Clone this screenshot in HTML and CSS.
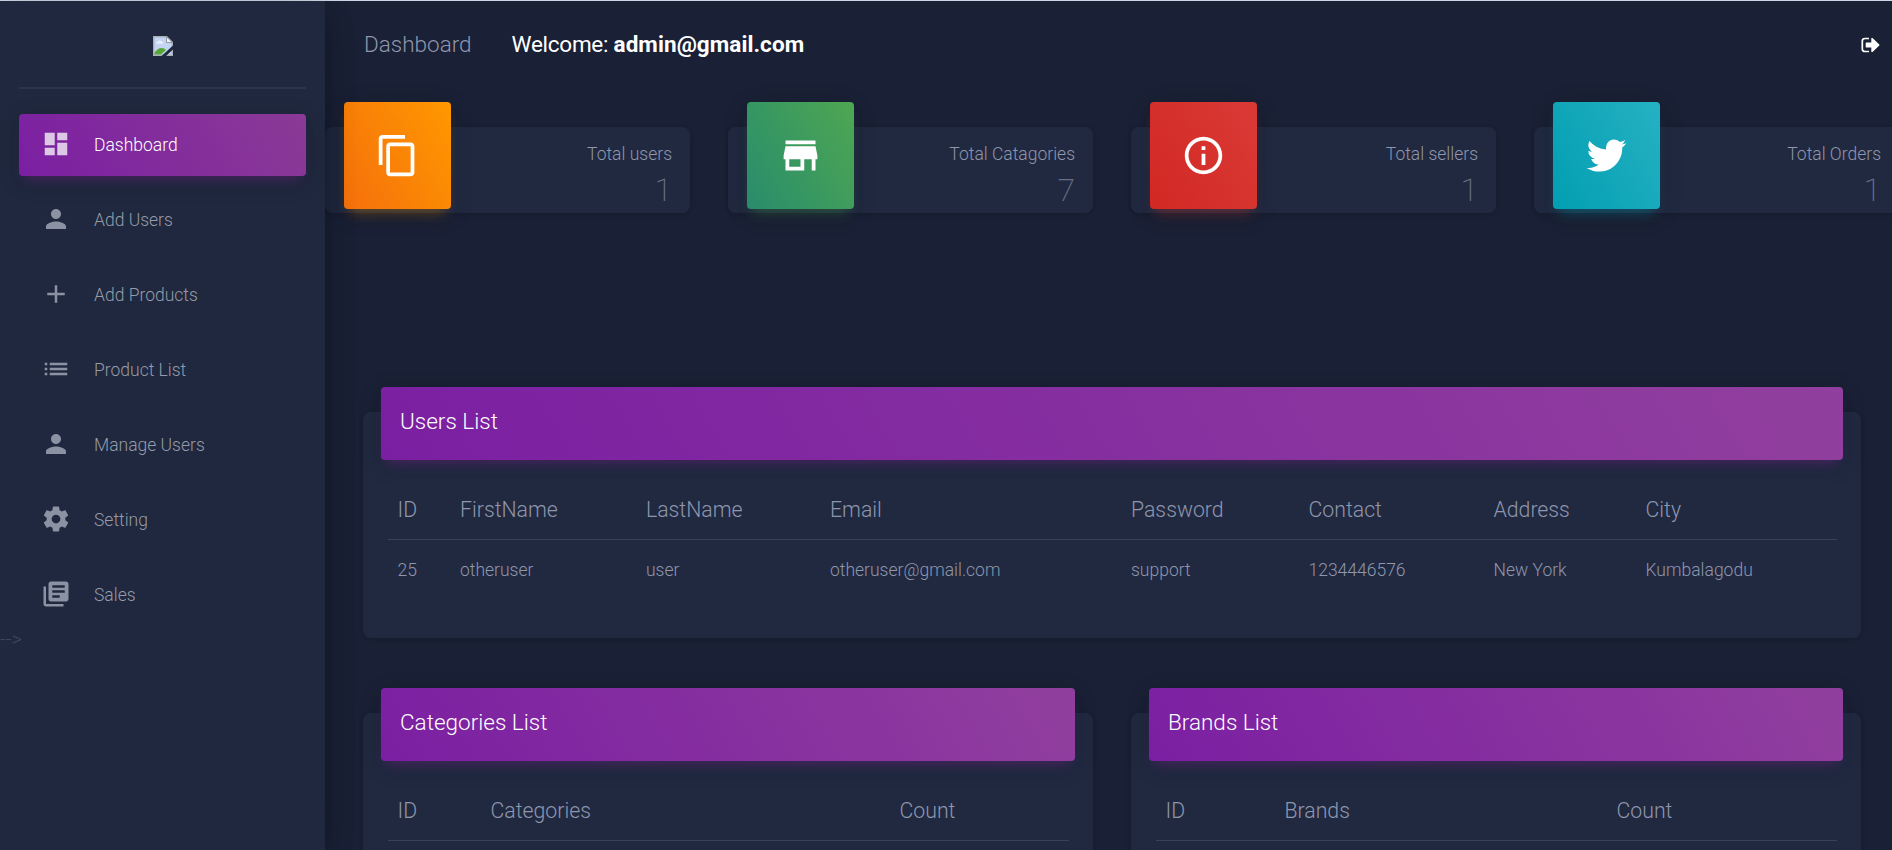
FILE: index.html
```html
<!DOCTYPE html>
<html lang="en">
<head>
<meta charset="utf-8">
<title>Dashboard</title>
<link rel="stylesheet" href="styles.css">
</head>
<body>
<div class="wrapper">
  <aside class="sidebar">
    <div class="logo">
      <svg width="20" height="20" viewBox="0 0 20 20">
        <path fill="#a9afb9" d="M0 0h14l6 6v14H0z"/>
        <path fill="#c3d5f2" d="M1.5 1.5h12l5 5v12h-17z"/>
        <path fill="#eef3fb" d="M3 7.500q.4-2 2.300-2 1.200-2 3 0 1.900 0 2.200 2z"/>
        <path fill="#58a636" d="M1.500 18.500v-1.500q3-5 7-5 3 0 4.500 2l-5 4.500z"/>
        <path fill="#f4f6fa" stroke="#8f97a5" d="M13.500.8v5.700h5.700z"/>
        <path fill="#20283d" d="M20 9.500v4L13 20H8.500z"/>
      </svg>
    </div>
    <nav class="nav">
      <a class="nav-link active"><svg class="icon" viewBox="0 0 24 24"><path d="M3 13h8V3H3v10zm0 8h8v-6H3v6zm10 0h8V11h-8v10zm0-18v6h8V3h-8z"/></svg><span>Dashboard</span></a>
      <a class="nav-link"><svg class="icon" viewBox="0 0 24 24"><path d="M12 12c2.210 0 4-1.790 4-4s-1.790-4-4-4-4 1.790-4 4 1.790 4 4 4zm0 2c-2.670 0-8 1.340-8 4v2h16v-2c0-2.660-5.330-4-8-4z"/></svg><span>Add Users</span></a>
      <a class="nav-link"><svg class="icon" viewBox="0 0 24 24"><path d="M19 13h-6v6h-2v-6H5v-2h6V5h2v6h6v2z"/></svg><span>Add Products</span></a>
      <a class="nav-link"><svg class="icon" viewBox="0 0 24 24"><path d="M3 13h2v-2H3v2zm0 4h2v-2H3v2zm0-8h2V7H3v2zm4 4h14v-2H7v2zm0 4h14v-2H7v2zM7 7v2h14V7H7z"/></svg><span>Product List</span></a>
      <a class="nav-link"><svg class="icon" viewBox="0 0 24 24"><path d="M12 12c2.210 0 4-1.790 4-4s-1.790-4-4-4-4 1.790-4 4 1.790 4 4 4zm0 2c-2.670 0-8 1.340-8 4v2h16v-2c0-2.660-5.330-4-8-4z"/></svg><span>Manage Users</span></a>
      <a class="nav-link"><svg class="icon" viewBox="0 0 24 24"><path d="M19.430 12.980c.04-.32.070-.64.070-.98s-.03-.66-.07-.98l2.110-1.650c.19-.15.240-.42.120-.64l-2-3.460c-.12-.22-.39-.3-.61-.22l-2.490 1c-.52-.4-1.080-.73-1.690-.98l-.38-2.650C14.460 2.180 14.250 2 14 2h-4c-.25 0-.46.180-.49.420l-.38 2.650c-.61.250-1.170.590-1.690.980l-2.490-1c-.23-.09-.49 0-.61.220l-2 3.460c-.13.220-.07.490.120.640l2.110 1.650c-.04.320-.07.650-.07.980s.03.660.070.980l-2.110 1.650c-.19.150-.24.420-.12.640l2 3.460c.12.220.39.300.610.220l2.490-1c.52.400 1.080.730 1.690.980l.38 2.650c.03.240.240.420.490.420h4c.25 0 .46-.18.490-.42l.38-2.650c.61-.25 1.170-.59 1.690-.98l2.490 1c.23.090.490 0 .610-.22l2-3.460c.12-.22.070-.49-.12-.64l-2.110-1.650zM12 15.500c-1.930 0-3.500-1.570-3.500-3.500s1.570-3.500 3.500-3.500 3.500 1.570 3.500 3.500-1.570 3.500-3.500 3.500z"/></svg><span>Setting</span></a>
      <a class="nav-link"><svg class="icon" viewBox="0 0 24 24"><path d="M4 6H2v14c0 1.100.9 2 2 2h14v-2H4V6zm16-4H8c-1.100 0-2 .9-2 2v12c0 1.100.9 2 2 2h12c1.100 0 2-.9 2-2V4c0-1.100-.9-2-2-2zm-1 9H9V9h10v2zm-4 4H9v-2h6v2zm4-8H9V5h10v2z"/></svg><span>Sales</span></a>
    </nav>
    <div class="stray">--&gt;</div>
  </aside>
  <main class="main">
    <header class="topbar">
      <span class="brand">Dashboard</span>
      <span class="welcome">Welcome: <b>admin@gmail.com</b></span>
      <svg class="logout" viewBox="0 0 19 16"><path fill="none" stroke="#fff" stroke-width="1.700" d="M8 1.500H4Q1.300 1.500 1.300 4v8q0 2.500 2.700 2.500h4"/><path fill="#fff" d="M5.300 5.500h5V1.200q.6-.8 1.500 0l6.500 6.300q.4.500 0 1l-6.500 6.300q-.9.800-1.500 0v-4.300h-5q-.6 0-.6-.6V6.100q0-.6.6-.6z"/></svg>
    </header>
    <section class="stats">
      <article class="stat"><div class="tile orange"><svg viewBox="0 0 24 24"><path d="M16 1H4c-1.100 0-2 .9-2 2v14h2V3h12V1zm3 4H8c-1.100 0-2 .9-2 2v14c0 1.100.9 2 2 2h11c1.100 0 2-.9 2-2V7c0-1.100-.9-2-2-2zm0 16H8V7h11v14z"/></svg></div><div class="figures"><p>Total users</p><h3>1</h3></div></article>
      <article class="stat"><div class="tile green"><svg viewBox="0 0 24 24"><path d="M20 4H4v2h16V4zm1 10v-2l-1-5H4l-1 5v2h1v6h10v-6h4v6h2v-6h1zm-9 4H6v-4h6v4z"/></svg></div><div class="figures"><p>Total Catagories</p><h3>7</h3></div></article>
      <article class="stat"><div class="tile red"><svg viewBox="0 0 24 24"><path d="M11 17h2v-6h-2v6zm1-15C6.480 2 2 6.480 2 12s4.480 10 10 10 10-4.480 10-10S17.520 2 12 2zm0 18c-4.410 0-8-3.590-8-8s3.590-8 8-8 8 3.590 8 8-3.590 8-8 8zM11 9h2V7h-2v2z"/></svg></div><div class="figures"><p>Total sellers</p><h3>1</h3></div></article>
      <article class="stat"><div class="tile cyan"><svg viewBox="0 0 1792 1792"><path d="M1684 408q-67 98-162 167 1 14 1 42 0 130-38 259.500t-115.500 248.500-184.500 210.500-258 146-323 54.500q-271 0-496-145 35 4 78 4 225 0 401-138-105-2-188-64.500t-114-159.500q33 5 61 5 43 0 85-11-112-23-185.500-111.500t-73.500-205.500v-4q68 38 146 41-66-44-105-115t-39-154q0-88 44-163 121 149 294.500 238.500t371.500 99.500q-8-38-8-74 0-134 94.500-228.500t228.500-94.500q140 0 236 102 109-21 205-78-37 115-142 178 93-10 186-50z"/></svg></div><div class="figures"><p>Total Orders</p><h3>1</h3></div></article>
    </section>
    <section class="card users">
      <h4 class="card-title">Users List</h4>
      <table>
        <colgroup><col class="w-id"><col class="w-first"><col class="w-last"><col class="w-email"><col class="w-pass"><col class="w-contact"><col class="w-address"><col></colgroup>
        <thead><tr><th>ID</th><th>FirstName</th><th>LastName</th><th>Email</th><th>Password</th><th>Contact</th><th>Address</th><th>City</th></tr></thead>
        <tbody><tr><td>25</td><td>otheruser</td><td>user</td><td>otheruser@gmail.com</td><td>support</td><td>1234446576</td><td>New York</td><td>Kumbalagodu</td></tr></tbody>
      </table>
    </section>
    <div class="columns">
      <section class="card">
        <h4 class="card-title">Categories List</h4>
        <table>
          <colgroup><col class="w-cat-id"><col class="w-cat"><col></colgroup>
          <thead><tr><th>ID</th><th>Categories</th><th>Count</th></tr></thead>
        </table>
      </section>
      <section class="card">
        <h4 class="card-title">Brands List</h4>
        <table>
          <colgroup><col class="w-brand-id"><col class="w-brand"><col></colgroup>
          <thead><tr><th>ID</th><th>Brands</th><th>Count</th></tr></thead>
        </table>
      </section>
    </div>
  </main>
</div>
</body>
</html>
```

FILE: styles.css
```css
* { box-sizing: border-box; }
body {
  margin: 0;
  height: 850px;
  overflow: hidden;
  background: #1a2035;
  color: #8f96ad;
  font: 300 17.5px/1.5 Roboto, "Liberation Sans", sans-serif;
}
h3, h4, p { margin: 0; font-weight: 300; }
.wrapper {
  display: flex;
  height: 850px;
  border-top: 1px solid #ccd6e6;
}
.sidebar {
  position: relative;
  z-index: 1;
  flex: 0 0 325px;
  padding: 0 19px;
  background: #1f283e;
  box-shadow: 0 12px 38px -15px rgba(0,0,0,.42), 0 5px 31px 0 rgba(0,0,0,.12), 0 10px 12px -6px rgba(0,0,0,.2);
}
.logo {
  display: flex;
  justify-content: center;
  height: 88px;
  padding-top: 35px;
  border-bottom: 2px solid #2b3449;
}
.nav {
  display: flex;
  flex-direction: column;
  gap: 13px;
  padding-top: 25px;
}
.nav-link {
  display: flex;
  align-items: center;
  gap: 23px;
  height: 62px;
  padding: 0 22px 2px;
  border-radius: 4px;
  color: #969ba8;
}
.nav-link span { padding-top: 2px; }
.icon { width: 30px; height: 30px; fill: #8b92a3; }
.active {
  color: #fff;
  background: linear-gradient(60deg, #7b1fa2, #8b3a96);
  box-shadow: 0 5px 25px 0 rgba(0,0,0,.14), 0 9px 12px -6px rgba(156,39,176,.4);
}
.active .icon { fill: #dcc8e4; }
.stray {
  margin-left: -19px;
  color: #3f475b;
  font-size: 20px;
  line-height: 26px;
}
.main { flex: 1; min-width: 0; overflow: hidden; }
.topbar {
  display: flex;
  align-items: center;
  height: 86px;
  padding: 2px 12px 0 39px;
  font-size: 22.5px;
}
.welcome { margin-left: 40px; color: #fff; font-weight: 400; letter-spacing: -.27px; }
.welcome b { font-weight: 700; letter-spacing: .07px; }
.logout { width: 19px; height: 16px; margin-left: auto; }
.stats { display: flex; gap: 38px; margin-top: 40px; }
.stat {
  display: flex;
  flex: 0 0 365px;
  justify-content: space-between;
  height: 86px;
  padding: 0 18px 0 19px;
  border-radius: 7.5px;
  background: #202940;
  box-shadow: 0 1px 5px rgba(0,0,0,.14);
}
.tile {
  display: grid;
  place-items: center;
  width: 107px;
  height: 107px;
  margin-top: -25px;
  border-radius: 4px;
}
.tile svg { width: 45px; height: 45px; fill: #fff; }
.orange { background: linear-gradient(60deg, #f5700c, #ff9800); box-shadow: 0 5px 25px rgba(0,0,0,.14), 0 9px 12px -6px rgba(255,152,0,.4); }
.green { background: linear-gradient(60deg, #288c6c, #4ea752); box-shadow: 0 5px 25px rgba(0,0,0,.14), 0 9px 12px -6px rgba(76,175,80,.4); }
.red { background: linear-gradient(60deg, #d22824, #da3a36); box-shadow: 0 5px 25px rgba(0,0,0,.14), 0 9px 12px -6px rgba(244,67,54,.4); }
.cyan { background: linear-gradient(60deg, #029eb1, #25b1c3); box-shadow: 0 5px 25px rgba(0,0,0,.14), 0 9px 12px -6px rgba(0,188,212,.4); }
.figures { padding-top: 14px; text-align: right; }
.figures h3 { color: #666e86; font-size: 32px; line-height: 46px; font-weight: 200; }
.card {
  padding: 0 18px;
  border-radius: 7.5px;
  background: #202940;
  box-shadow: 0 1px 5px rgba(0,0,0,.14);
}
.users { width: 1498px; height: 226px; margin: 199px 0 0 38px; }
.card-title {
  height: 73px;
  padding: 17px 19px;
  margin: 0;
  border-radius: 4px;
  background: linear-gradient(60deg, #7b1fa2, #913f9e);
  box-shadow: 0 5px 25px 0 rgba(0,0,0,.14), 0 9px 12px -6px rgba(156,39,176,.4);
  color: #fff;
  font-size: 22.5px;
  line-height: 34px;
  transform: translateY(-25px);
}
table {
  width: calc(100% - 13px);
  margin: 0 6px 0 7px;
  table-layout: fixed;
  border-collapse: collapse;
}
th, td { padding: 0 9.500px; text-align: left; font-weight: 300; }
th { height: 54px; padding-bottom: 4px; font-size: 21.250px; border-bottom: 1px solid #3a4259; }
td { height: 61px; }
.w-id { width: 62.500px; } .w-first { width: 186px; } .w-last { width: 184px; }
.w-email { width: 301px; } .w-pass { width: 177.500px; } .w-contact { width: 185px; } .w-address { width: 152px; }
.columns { display: flex; gap: 38px; width: 1498px; margin: 75px 0 0 38px; }
.columns .card { flex: 1; height: 300px; }
.w-cat-id { width: 93px; } .w-cat { width: 409px; }
.w-brand-id { width: 119px; } .w-brand { width: 332px; }
```
